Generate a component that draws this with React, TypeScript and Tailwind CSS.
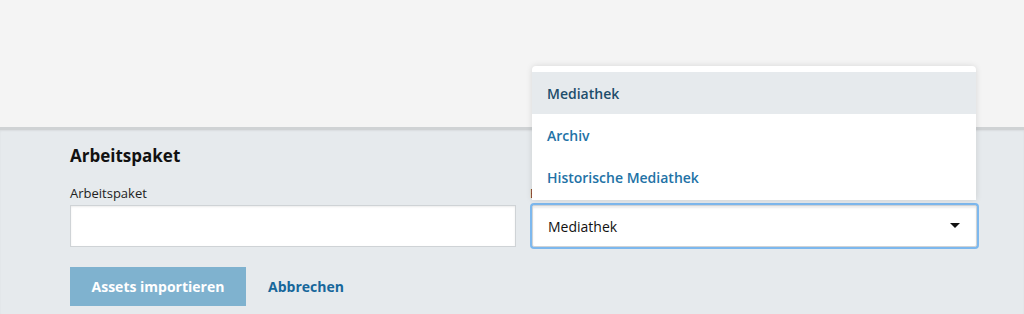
import React from 'react';

const options = ['Mediathek', 'Archiv', 'Historische Mediathek'];

const App: React.FC = () => {
  return (
    <div className="h-[314px] w-full overflow-hidden bg-[#f4f4f4] font-['Open_Sans',sans-serif]">
      {/* Top empty area */}
      <div className="h-[127px]" />

      {/* Form panel */}
      <div className="h-[187px] border-t-[3px] border-[#cfd2d4] bg-[#e6eaed] pl-[70px] pr-[45px] pt-[14px] shadow-[inset_0_1px_2px_rgba(0,0,0,0.06)]">
        <h2 className="text-[17px] leading-[24px] font-bold text-[#111]">Arbeitspaket</h2>

        <div className="mt-[16px] grid grid-cols-[446px_1fr] gap-[14px]">
          <div>
            <label className="block text-[13px] leading-[18px] text-[#222]">Arbeitspaket</label>
            <input
              type="text"
              className="mt-[3px] block h-[42px] w-full border border-[#cfd3d6] bg-white shadow-[inset_0_1px_2px_rgba(0,0,0,0.08)] outline-none"
            />
          </div>

          <div>
            <label className="block text-[13px] leading-[18px] text-[#222]">Bereich</label>
            <div className="relative mt-[3px] px-[2px]">
              {/* Open dropdown menu */}
              <div className="absolute bottom-[calc(100%+5px)] left-[2px] right-[3px] z-10 rounded-t-[4px] bg-white pt-[6px] pb-[2px] shadow-[0_0_6px_rgba(0,0,0,0.12)]">
                {options.map((opt, i) => (
                  <div
                    key={opt}
                    className={
                      i === 0
                        ? 'flex h-[42px] items-center bg-[#e6eaed] px-[15px] text-[14px] font-semibold text-[#1d4d6b]'
                        : 'flex h-[42px] items-center px-[15px] text-[14px] font-semibold text-[#2272a6]'
                    }
                  >
                    {opt}
                  </div>
                ))}
              </div>

              <div className="flex h-[42px] items-center justify-between rounded-[2px] border border-[#cfd3d6] bg-white px-[15px] shadow-[0_0_0_2px_#7db8ee,inset_0_2px_2px_rgba(0,0,0,0.08)]">
                <span className="text-[14px] text-[#111]">Mediathek</span>
                <svg width="10" height="6" viewBox="0 0 10 6" className="mr-[1px]">
                  <path d="M0 0h10L5 5z" fill="#111" />
                </svg>
              </div>
            </div>
          </div>
        </div>

        <div className="mt-[20px] flex items-center gap-[22px]">
          <button className="h-[39px] w-[176px] bg-[#7fb2cf] text-[14px] font-bold text-white">
            Assets importieren
          </button>
          <button className="text-[14px] font-bold text-[#17679b]">Abbrechen</button>
        </div>
      </div>
    </div>
  );
};

export default App;
